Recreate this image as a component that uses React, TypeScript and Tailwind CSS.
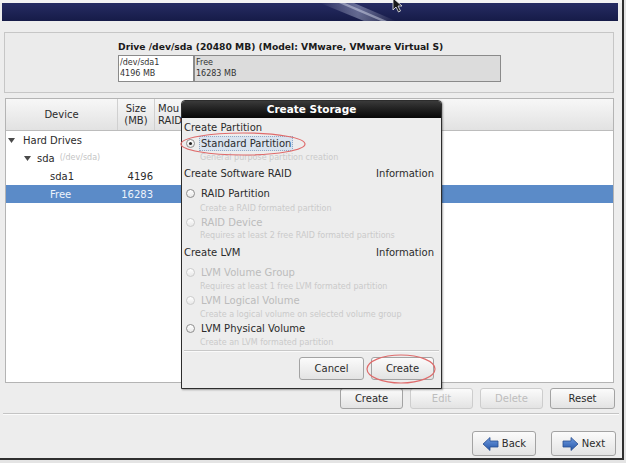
import * as React from 'react';

type Row =
  | { kind: 'head'; h: number; text: string; info?: boolean }
  | { kind: 'radio'; h: number; text: string; disabled?: boolean; checked?: boolean; focus?: boolean }
  | { kind: 'sub'; h: number; text: string };

const rows: Row[] = [
  { kind: 'head', h: 15, text: 'Create Partition' },
  { kind: 'radio', h: 15, text: 'Standard Partition', checked: true, focus: true },
  { kind: 'sub', h: 16, text: 'General purpose partition creation' },
  { kind: 'head', h: 19, text: 'Create Software RAID', info: true },
  { kind: 'radio', h: 16, text: 'RAID Partition' },
  { kind: 'sub', h: 13, text: 'Create a RAID formated partition' },
  { kind: 'radio', h: 14, text: 'RAID Device', disabled: true },
  { kind: 'sub', h: 17, text: 'Requires at least 2 free RAID formated partitions' },
  { kind: 'head', h: 19, text: 'Create LVM', info: true },
  { kind: 'radio', h: 15, text: 'LVM Volume Group', disabled: true },
  { kind: 'sub', h: 13, text: 'Requires at least 1 free LVM formated partition' },
  { kind: 'radio', h: 15, text: 'LVM Logical Volume', disabled: true },
  { kind: 'sub', h: 13, text: 'Create a logical volume on selected volume group' },
  { kind: 'radio', h: 15, text: 'LVM Physical Volume' },
  { kind: 'sub', h: 14, text: 'Create an LVM formated partition' },
];

function Arrow({ dir }: { dir: 'left' | 'right' }) {
  return (
    <svg width="17" height="14" viewBox="0 0 17 14" className={dir === 'right' ? '' : '-scale-x-100'}>
      <defs>
        <linearGradient id={`ar-${dir}`} x1="0" y1="0" x2="0" y2="1">
          <stop offset="0" stopColor="#6f9be0" />
          <stop offset="1" stopColor="#2556a8" />
        </linearGradient>
      </defs>
      <path d="M1 4 H9 V0.5 L16 7 L9 13.5 V10 H1 Z" fill={`url(#ar-${dir})`} stroke="#2a4f8f" strokeWidth="0.8" />
    </svg>
  );
}

function Btn({
  label,
  w,
  h = 21,
  disabled,
  icon,
}: {
  label: string;
  w: number;
  h?: number;
  disabled?: boolean;
  icon?: React.ReactNode;
}) {
  return (
    <div
      className={`flex items-center justify-center gap-[3px] rounded-[3px] border bg-gradient-to-b from-[#fbfbfb] to-[#e3e3e3] text-[10px] ${
        disabled ? 'border-[#cdcdcd] text-[#bdbdbd]' : 'border-[#a3a3a3] text-[#2b2b2b]'
      }`}
      style={{ width: w, height: h }}
    >
      {icon}
      <span>{label}</span>
    </div>
  );
}

function Tri({ className }: { className?: string }) {
  return (
    <svg width="7" height="5" viewBox="0 0 7 5" className={className}>
      <path d="M0 0 H7 L3.5 5 Z" fill="#4a4a4a" />
    </svg>
  );
}

function Radio({ disabled, checked }: { disabled?: boolean; checked?: boolean }) {
  return (
    <span
      className={`ml-[4px] flex size-[9px] shrink-0 items-center justify-center rounded-full border bg-gradient-to-b from-white to-[#e8e8e8] ${
        disabled ? 'border-[#cbcbcb]' : 'border-[#8e8e8e]'
      }`}
    >
      {checked && <span className="size-[3px] rounded-full bg-[#222]" />}
    </span>
  );
}

function CreateStorage() {
  return (
    <div className="absolute left-[181px] top-[100px] flex h-[289px] w-[261px] flex-col overflow-hidden rounded-t-[4px] border border-[#2d2d2d] bg-[#ededed] shadow-[1px_1px_2px_rgba(0,0,0,0.35)]">
      <div className="flex h-[17px] shrink-0 items-center justify-center bg-gradient-to-b from-[#3a3a3a] to-[#080808] text-[10.5px] font-bold text-white">
        Create Storage
      </div>
      <div className="flex flex-col pt-[3px]">
        {rows.map((r, i) => {
          if (r.kind === 'head')
            return (
              <div key={i} className="flex items-start justify-between pl-[2px] pr-[7px] text-[10px] leading-[14px] text-[#2b2b2b]" style={{ height: r.h }}>
                <span>{r.text}</span>
                {r.info && <span>Information</span>}
              </div>
            );
          if (r.kind === 'sub')
            return (
              <div key={i} className="pl-[18px] text-[8px] leading-[14px] text-[#cacaca]" style={{ height: r.h }}>
                {r.text}
              </div>
            );
          return (
            <div key={i} className="flex items-start" style={{ height: r.h }}>
              <div className="flex h-[14px] items-center gap-[4px]">
                <Radio disabled={r.disabled} checked={r.checked} />
                <span
                  className={`border px-[1px] text-[10px] leading-[13px] ${
                    r.focus ? 'border-dotted border-[#93a9c4] bg-[#d9e3ef]' : 'border-transparent'
                  } ${r.disabled ? 'text-[#bcbcbc]' : 'text-[#2b2b2b]'}`}
                >
                  {r.text}
                </span>
              </div>
            </div>
          );
        })}
      </div>
      <div className="mx-[2px] h-[2px] shrink-0 border-t border-[#c8c8c8] bg-white/70" />
      <div className="mt-[5px] flex justify-end gap-[7px] pr-[7px]">
        <Btn label="Cancel" w={65} h={23} />
        <Btn label="Create" w={63} h={23} />
      </div>
    </div>
  );
}

export default function App() {
  return (
    <div className="relative h-[463px] w-[626px] overflow-hidden bg-[#e4e4e4] font-['DejaVu_Sans',sans-serif]">
      <div className="flex h-[460px] w-[624px] flex-col border-b-2 border-r-2 border-[#2f2f2f] bg-[#ededed]">
        <div className="h-[3px] shrink-0 bg-[#f3f3f3]" />
        <div className="ml-[2px] mr-[4px] h-[18px] shrink-0">
          <svg width="616" height="18" viewBox="0 0 616 18" className="block">
            <defs>
              <linearGradient id="ban" x1="0" y1="0" x2="0" y2="1">
                <stop offset="0" stopColor="#262c63" />
                <stop offset="1" stopColor="#161b48" />
              </linearGradient>
              <linearGradient id="streak" x1="0" y1="0" x2="1" y2="0">
                <stop offset="0" stopColor="#ffffff" stopOpacity="0" />
                <stop offset="0.5" stopColor="#c9d0ea" stopOpacity="0.75" />
                <stop offset="1" stopColor="#ffffff" stopOpacity="0" />
              </linearGradient>
            </defs>
            <rect width="616" height="18" fill="url(#ban)" />
            <polygon points="318,0 352,0 394,18 362,18" fill="url(#streak)" opacity="0.55" />
            <polygon points="337,0 343,0 385,18 379,18" fill="#dfe4f5" opacity="0.45" />
          </svg>
        </div>

        {/* drive bar */}
        <div className="ml-[4px] mt-[11px] h-[61px] w-[610px] shrink-0 border border-[#c6c6c6] bg-[#ebebeb] pl-[113px] pt-[7px]">
          <div className="whitespace-nowrap text-[9.2px] font-bold leading-[13px] text-[#1a1a1a]">
            Drive /dev/sda (20480 MB) (Model: VMware, VMware Virtual S)
          </div>
          <div className="mt-[2px] flex h-[27px] w-[383px] border border-[#8a8a8a] text-[8px] leading-[11px] text-[#333]">
            <div className="w-[76px] border-r-2 border-[#8a8a8a] bg-white pl-[1px] pt-[1px]">
              <div>/dev/sda1</div>
              <div>4196 MB</div>
            </div>
            <div className="flex-1 bg-[#dcdcdc] pl-[1px] pt-[1px]">
              <div>Free</div>
              <div>16283 MB</div>
            </div>
          </div>
        </div>

        {/* device tree */}
        <div className="ml-[5px] mt-[5px] flex h-[285px] w-[609px] shrink-0 flex-col border border-[#b4b4b4] bg-white text-[10px] text-[#2b2b2b]">
          <div className="flex h-[32px] shrink-0 border-b border-[#bcbcbc] bg-gradient-to-b from-[#f7f7f7] to-[#e2e2e2]">
            <div className="flex w-[112px] items-center justify-center border-r border-[#d0d0d0]">Device</div>
            <div className="flex w-[37px] flex-col items-center justify-center border-r border-[#d0d0d0] leading-[12px]">
              <span>Size</span>
              <span>(MB)</span>
            </div>
            <div className="flex flex-col justify-center whitespace-nowrap pl-[3px] leading-[12px]">
              <span>Mou</span>
              <span>RAID</span>
            </div>
          </div>
          <div className="flex h-[18px] items-center">
            <Tri className="ml-[2px]" />
            <span className="ml-[8px]">Hard Drives</span>
          </div>
          <div className="flex h-[18px] items-center">
            <Tri className="ml-[18px]" />
            <span className="ml-[6px]">sda</span>
            <span className="ml-[5px] text-[8px] text-[#c4c4c4]">(/dev/sda)</span>
          </div>
          <div className="flex h-[18px] items-center">
            <span className="ml-[44px] w-[68px]">sda1</span>
            <span className="w-[35px] text-right">4196</span>
          </div>
          <div className="flex h-[18px] items-center bg-[#5b8bc8] text-[#eef3fb]">
            <span className="ml-[44px] w-[68px]">Free</span>
            <span className="w-[35px] text-right">16283</span>
          </div>
        </div>

        <div className="mt-[5px] flex shrink-0 justify-end gap-[7px] pr-[7px]">
          <Btn label="Create" w={63} h={21} />
          <Btn label="Edit" w={63} h={21} disabled />
          <Btn label="Delete" w={63} h={21} disabled />
          <Btn label="Reset" w={65} h={21} />
        </div>

        <div className="mx-[3px] mt-[4px] h-[2px] shrink-0 border-t border-[#c4c4c4] bg-white/80" />

        <div className="mt-[16px] flex shrink-0 justify-end gap-[15px] pr-[6px]">
          <Btn label="Back" w={64} h={25} icon={<Arrow dir="left" />} />
          <Btn label="Next" w={65} h={25} icon={<Arrow dir="right" />} />
        </div>
      </div>

      <CreateStorage />

      {/* mouse pointer */}
      <svg width="12" height="16" viewBox="0 0 12 16" className="absolute left-[392px] top-[-3px]">
        <path d="M1 1 V13 L4 10 L6.5 15 L8.5 14 L6 9 H10 Z" fill="#1a1a1a" stroke="#f0f0f0" strokeWidth="0.8" />
      </svg>

      {/* red annotation circles */}
      <svg width="626" height="463" className="pointer-events-none absolute left-0 top-0">
        <ellipse cx="243" cy="144" rx="62" ry="11" fill="none" stroke="#df6b6b" strokeWidth="1.2" />
        <ellipse cx="401" cy="369" rx="34" ry="14" fill="none" stroke="#df6b6b" strokeWidth="1.2" />
      </svg>
    </div>
  );
}
